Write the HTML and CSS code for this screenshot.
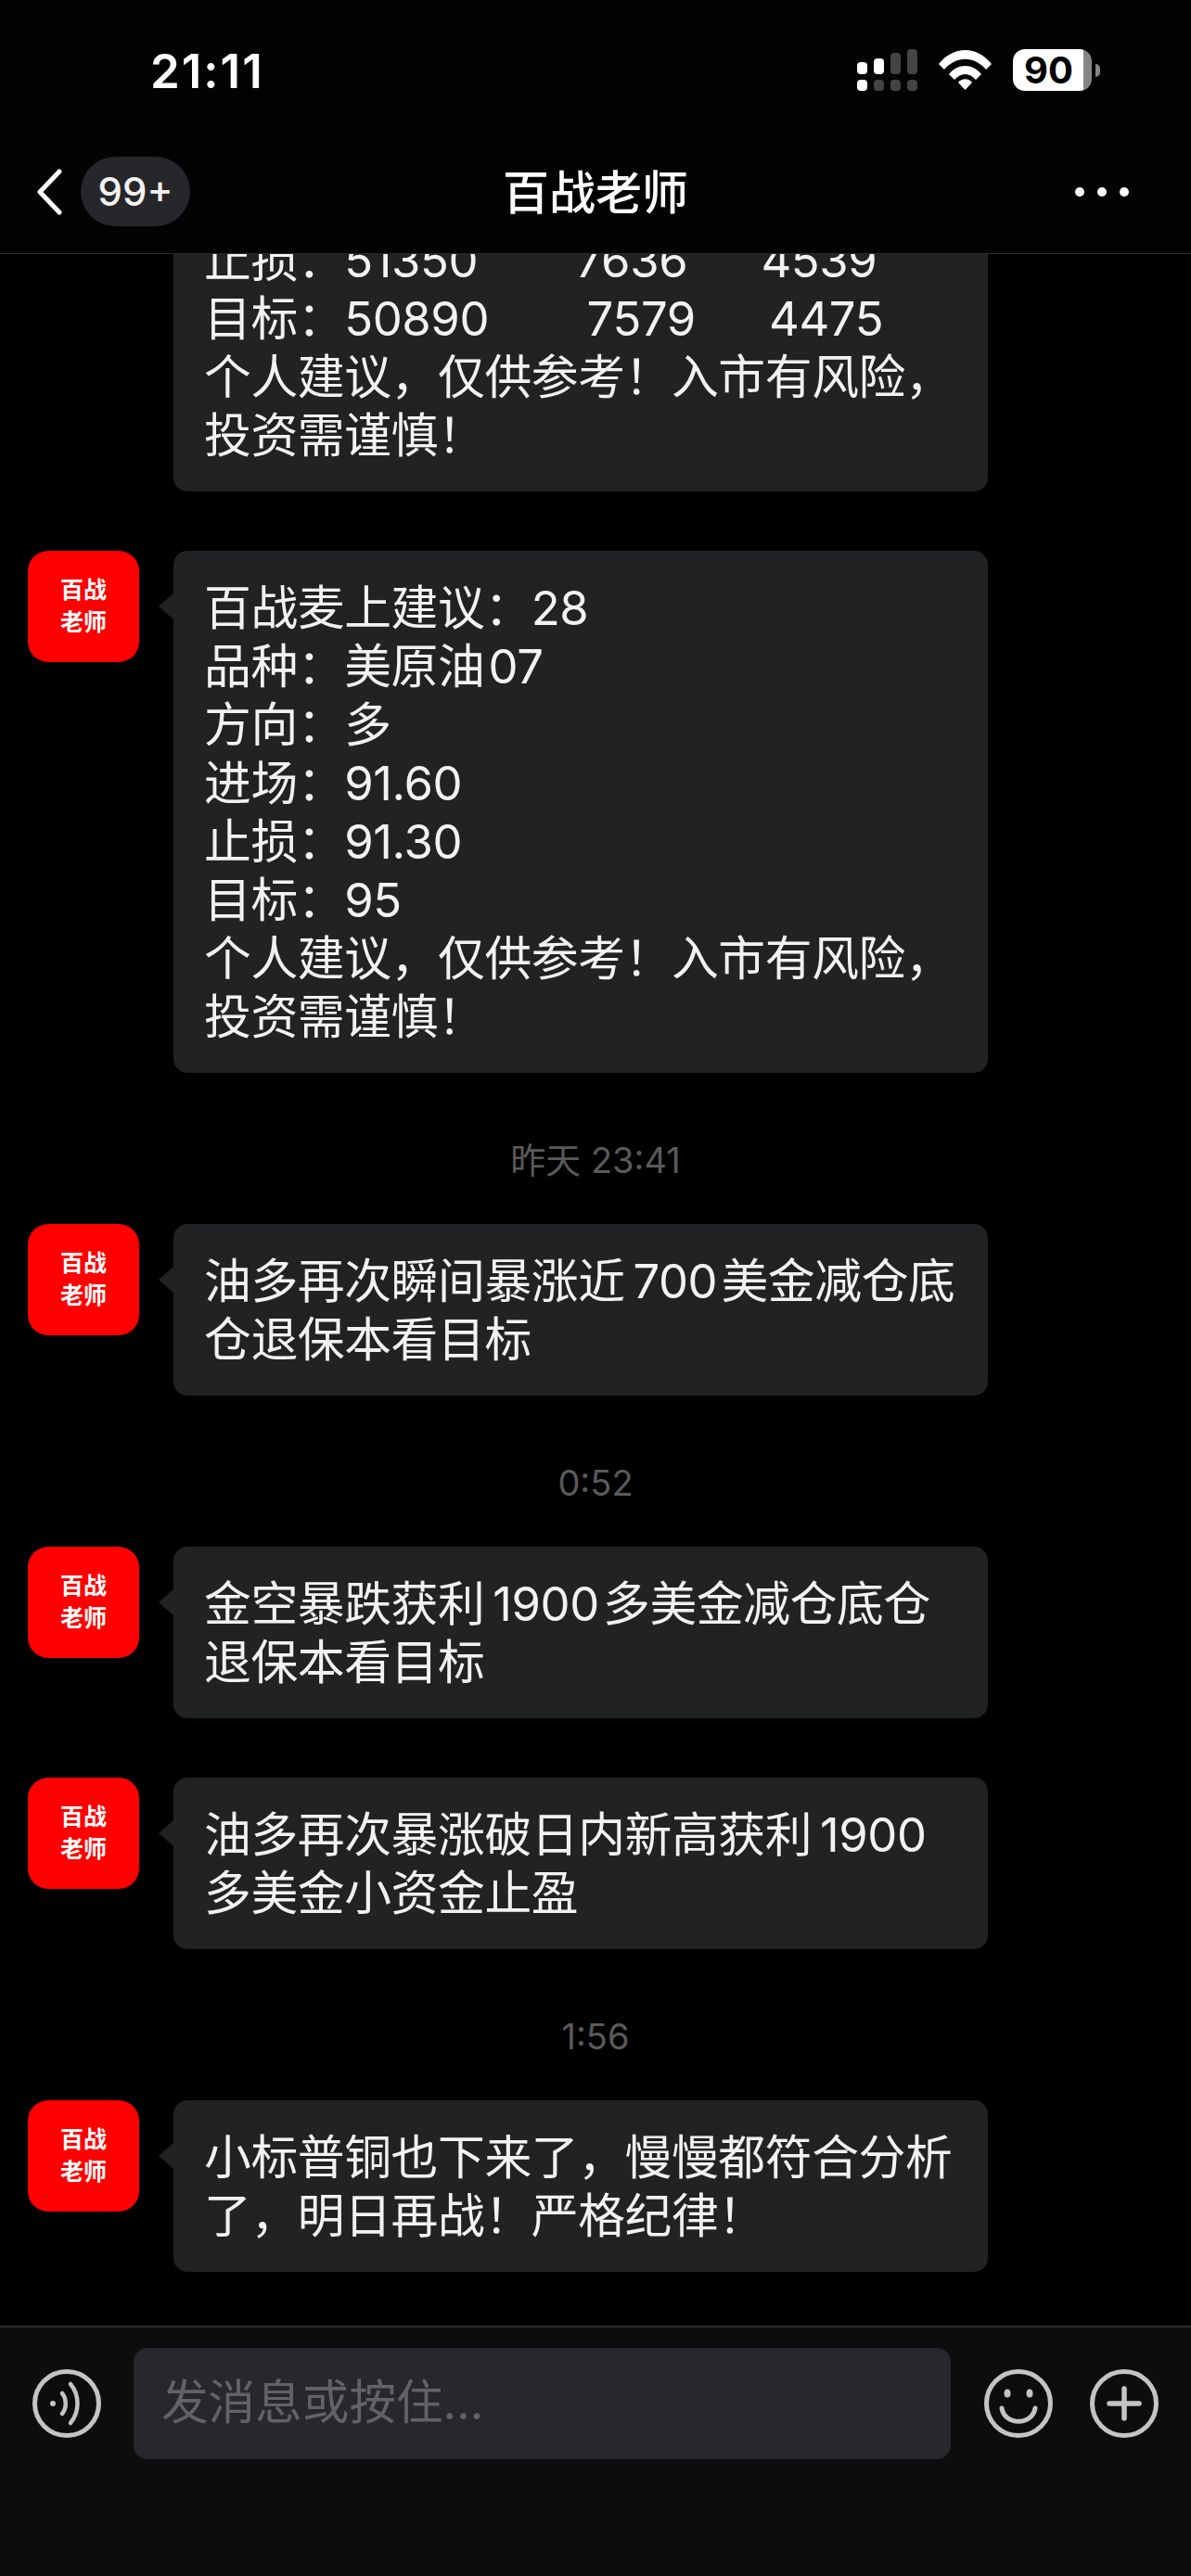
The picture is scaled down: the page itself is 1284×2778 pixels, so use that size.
FILE: index.html
```html
<!DOCTYPE html>
<html lang="zh-CN">
<head>
<meta charset="utf-8">
<title>百战老师</title>
<link rel="stylesheet" href="styles.css">
</head>
<body>
<div class="page">
  <header class="top">
    <div class="status">
      <span class="clock">21:11</span>
      <div class="status-icons">
        <svg class="signal" width="65" height="45" viewBox="0 0 65 45">
          <rect x="0" y="14" width="11" height="13" rx="4" fill="#fff"/>
          <rect x="18" y="10" width="11" height="17" rx="4" fill="#fff"/>
          <rect x="36" y="4" width="11" height="23" rx="4" fill="#444"/>
          <rect x="54" y="0" width="11" height="27" rx="4" fill="#444"/>
          <rect x="0" y="33" width="11" height="12" rx="4" fill="#fff"/>
          <rect x="18" y="33" width="11" height="12" rx="4" fill="#444"/>
          <rect x="36" y="33" width="11" height="12" rx="4" fill="#444"/>
          <rect x="54" y="33" width="11" height="12" rx="4" fill="#444"/>
        </svg>
        <svg class="wifi" width="57" height="43" viewBox="0 0 57 43">
          <path d="M0 15 C16 -5 41 -5 57 15 L51 21 C38 6 19 6 6 21 Z" fill="#fff"/>
          <path d="M11 26 C21 14 36 14 46 26 L40 32 C33 24 24 24 17 32 Z" fill="#fff"/>
          <path d="M21 35 C25 30 32 30 36 35 L28.500 43 Z" fill="#fff"/>
        </svg>
        <div class="battery">
          <div class="battery-body"><span class="battery-level">90</span></div>
          <span class="battery-nub"></span>
        </div>
      </div>
    </div>
    <nav class="nav">
      <div class="nav-left">
        <svg class="back" width="30" height="50" viewBox="0 0 30 50">
          <path d="M26 3 L5 25 L26 47" fill="none" stroke="#fff" stroke-width="5" stroke-linecap="round" stroke-linejoin="round"/>
        </svg>
        <span class="unread">99+</span>
      </div>
      <h1 class="title">百战老师</h1>
      <svg class="more" width="58" height="10" viewBox="0 0 58 10">
        <circle cx="5" cy="5" r="5" fill="#fff"/>
        <circle cx="29" cy="5" r="5" fill="#fff"/>
        <circle cx="53" cy="5" r="5" fill="#fff"/>
      </svg>
    </nav>
  </header>

  <main class="chat">
    <div class="msg">
      <div class="avatar"></div>
      <div class="bubble bubble-scrolled"><span class="pre">止损：51350        7636      4539</span><br><span class="pre">目标：50890        7579      4475</span><br>个人建议，仅供参考！入市有风险，投资需谨慎！</div>
    </div>
    <div class="msg">
      <div class="avatar">百战<br>老师</div>
      <div class="bubble">百战麦上建议：28<br>品种：美原油&#8202;07<br>方向：多<br>进场：91.60<br>止损：91.30<br>目标：95<br>个人建议，仅供参考！入市有风险，投资需谨慎！</div>
    </div>
    <div class="time">昨天 23:41</div>
    <div class="msg">
      <div class="avatar">百战<br>老师</div>
      <div class="bubble">油多再次瞬间暴涨近&#8201;700&#8202;美金减仓底仓退保本看目标</div>
    </div>
    <div class="time">0:52</div>
    <div class="msg">
      <div class="avatar">百战<br>老师</div>
      <div class="bubble">金空暴跌获利&#8201;1900&#8202;多美金减仓底仓退保本看目标</div>
    </div>
    <div class="msg">
      <div class="avatar">百战<br>老师</div>
      <div class="bubble">油多再次暴涨破日内新高获利&#8201;1900 多美金小资金止盈</div>
    </div>
    <div class="time">1:56</div>
    <div class="msg">
      <div class="avatar">百战<br>老师</div>
      <div class="bubble">小标普铜也下来了，慢慢都符合分析了，明日再战！严格纪律！</div>
    </div>
  </main>

  <footer class="composer">
    <svg class="tool tool-voice" width="74" height="76" viewBox="0 0 74 76">
      <circle cx="37" cy="38" r="34.500" fill="none" stroke="#c4c4c4" stroke-width="5"/>
      <circle cx="22" cy="38" r="3" fill="#c4c4c4"/>
      <path d="M32 27 C37 33 37 43 32 49" fill="none" stroke="#c4c4c4" stroke-width="4.500" stroke-linecap="round"/>
      <path d="M41 17 C51 29 51 47 41 59" fill="none" stroke="#c4c4c4" stroke-width="4.500" stroke-linecap="round"/>
    </svg>
    <div class="input">发消息或按住...</div>
    <svg class="tool tool-smile" width="74" height="76" viewBox="0 0 74 76">
      <circle cx="37" cy="38" r="34.500" fill="none" stroke="#c4c4c4" stroke-width="5"/>
      <ellipse cx="25" cy="27" rx="3.500" ry="4.500" fill="#c4c4c4"/>
      <ellipse cx="49" cy="27" rx="3.500" ry="4.500" fill="#c4c4c4"/>
      <path d="M19 43 C22 62 52 62 55 43" fill="none" stroke="#c4c4c4" stroke-width="5" stroke-linecap="round"/>
    </svg>
    <svg class="tool tool-plus" width="74" height="76" viewBox="0 0 74 76">
      <circle cx="37" cy="38" r="34.500" fill="none" stroke="#c4c4c4" stroke-width="5"/>
      <path d="M21 38 H53 M37 22 V54" fill="none" stroke="#c4c4c4" stroke-width="5.500" stroke-linecap="round"/>
    </svg>
  </footer>
</div>
</body>
</html>
```
FILE: styles.css
```css
* { box-sizing: border-box; }
html, body { margin: 0; padding: 0; background: #000; }
body {
  font-family: Inter, "Noto Sans CJK SC", "Noto Sans", sans-serif;
  color: #f2f2f2;
}
.page {
  width: 1284px;
  height: 2778px;
  display: flex;
  flex-direction: column;
  overflow: hidden;
  background: #000;
}
.top {
  flex: none;
  height: 274px;
  background: #030303;
  border-bottom: 1px solid #2c2c2c;
  position: relative;
  z-index: 2;
}
.status {
  height: 140px;
  display: flex;
  align-items: flex-start;
  justify-content: space-between;
  padding: 0 98px 0 162px;
}
.clock {
  margin-top: 47px;
  font-size: 51px;
  line-height: 60px;
  font-weight: 600;
  letter-spacing: 2px;
  color: #fff;
}
.status-icons {
  display: flex;
  align-items: flex-start;
  margin-top: 53px;
}
.wifi { margin-left: 23px; margin-top: 1px; }
.battery {
  margin-left: 23px;
  display: flex;
  align-items: center;
}
.battery-body {
  width: 85px;
  height: 45px;
  border-radius: 13px;
  background: linear-gradient(to right, #fff 90%, #858585 90%);
  display: flex;
  align-items: center;
  justify-content: center;
  padding-right: 8px;
}
.battery-level {
  font-size: 40px;
  line-height: 45px;
  font-weight: 700;
  color: #000;
}
.battery-nub {
  width: 5px;
  height: 14px;
  margin-left: 4px;
  border-radius: 0 7px 7px 0;
  background: #858585;
}
.nav {
  height: 133px;
  display: flex;
  align-items: center;
  justify-content: space-between;
  padding: 0 67px 0 38px;
  position: relative;
}
.nav-left {
  display: flex;
  align-items: center;
  gap: 19px;
}
.unread {
  width: 118px;
  height: 75px;
  border-radius: 38px;
  background: #26272a;
  color: #f2f2f2;
  font-size: 42px;
  font-weight: 500;
  line-height: 75px;
  text-align: center;
}
.title {
  position: absolute;
  left: 0;
  right: 0;
  top: 40px;
  margin: 0;
  font-size: 50px;
  line-height: 56px;
  font-weight: 500;
  text-align: center;
  color: #fff;
}
.chat {
  flex: 1;
  min-height: 0;
  display: flex;
  flex-direction: column;
  justify-content: flex-end;
  overflow: hidden;
  padding-bottom: 58px;
}
.msg {
  flex: none;
  display: flex;
  align-items: flex-start;
  gap: 37px;
  padding-left: 30px;
}
.msg + .msg { margin-top: 64px; }
.avatar {
  flex: none;
  width: 120px;
  height: 120px;
  border-radius: 22px;
  background: #fe0000;
  color: #fff;
  font-size: 25px;
  line-height: 35px;
  font-weight: 700;
  text-align: center;
  padding-top: 25px;
}
.bubble {
  position: relative;
  width: 878px;
  padding: 30px 28px 29px 33px;
  border-radius: 15px;
  background: #212224;
  font-size: 50.800px;
  letter-spacing: -0.4px;
  line-height: 63px;
  font-weight: 400;
  color: #f2f2f2;
}
.bubble-scrolled { padding-top: 330px; }
.bubble::before {
  content: "";
  position: absolute;
  left: -16px;
  top: 46px;
  width: 0;
  height: 0;
  border-top: 14px solid transparent;
  border-bottom: 14px solid transparent;
  border-right: 16px solid #212224;
}
.pre { white-space: pre; word-spacing: -0.700px; }
.time {
  flex: none;
  margin: 69px 0 44px;
  height: 50px;
  font-size: 38px;
  line-height: 50px;
  text-align: center;
  color: #5a5a5a;
}
.composer {
  flex: none;
  height: 270px;
  background: #0d0d0d;
  border-top: 2px solid #2c2c2c;
  display: flex;
  align-items: flex-start;
  padding: 22px 0 0 35px;
  position: relative;
  z-index: 2;
}
.tool { flex: none; margin-top: 22px; }
.input {
  flex: none;
  width: 881px;
  height: 120px;
  margin-left: 35px;
  padding-left: 30px;
  border-radius: 15px;
  background: #27282c;
  color: #626366;
  font-size: 50.600px;
  line-height: 118px;
}
.tool-smile { margin-left: 36px; }
.tool-plus { margin-left: 40px; }
```
